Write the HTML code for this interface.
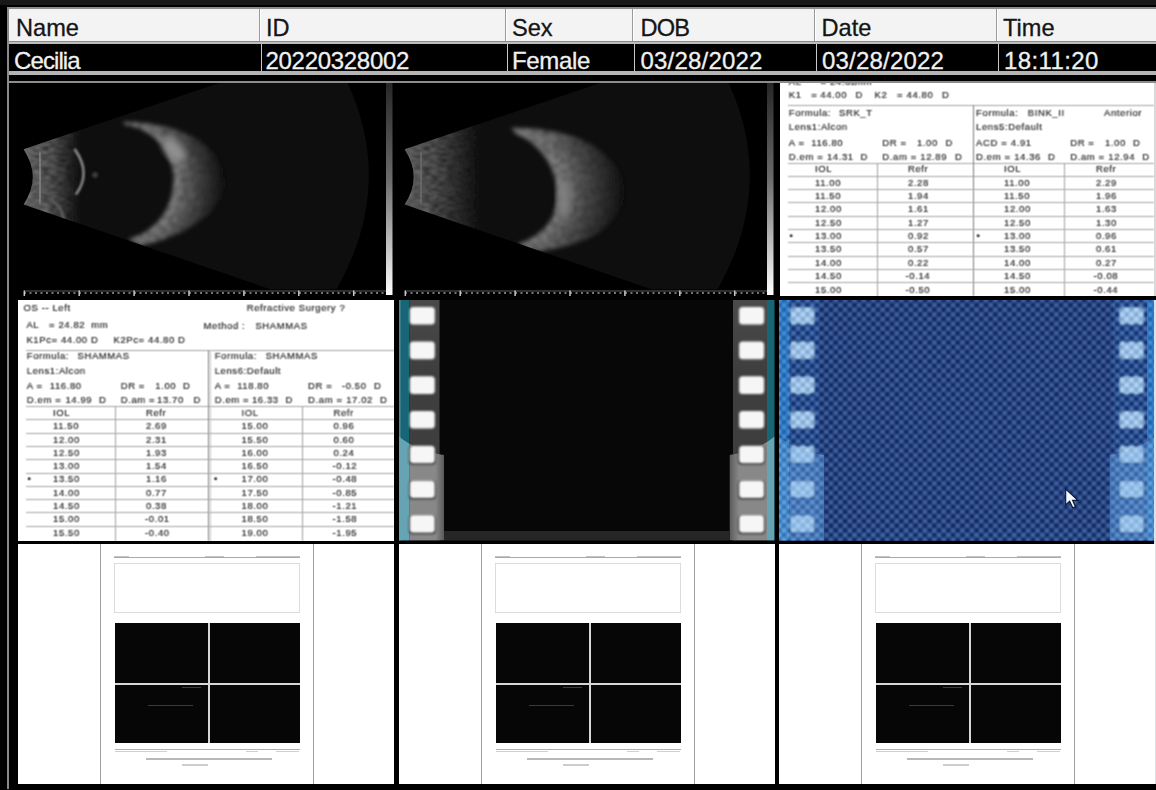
<!DOCTYPE html><html><head><meta charset="utf-8"><style>
*{margin:0;padding:0;box-sizing:border-box}
html,body{width:1156px;height:790px;overflow:hidden;background:#000}
body{position:relative;font-family:"Liberation Sans",sans-serif}
.abs{position:absolute}
.hd{position:absolute;top:11.5px;height:32px;font-size:23.6px;line-height:32px;color:#151515;white-space:nowrap;-webkit-text-stroke:0.3px #151515}
.dt{position:absolute;top:46.5px;height:27px;font-size:24px;line-height:27px;color:#f0f0f0;white-space:nowrap;-webkit-text-stroke:0.3px #f0f0f0}
.t{position:absolute;white-space:nowrap;font-size:9.5px;line-height:11px;color:#141414;letter-spacing:0.6px;-webkit-text-stroke:0.12px #141414}
.rep{position:absolute;background:#fff;overflow:hidden}
.hl{position:absolute;height:1px;background:#bdbdbd}
.vl{position:absolute;width:1px;background:#a8a8a8}
</style></head><body>
<svg width="0" height="0" style="position:absolute"><filter id="sb" x="0" y="0" width="100%" height="100%"><feConvolveMatrix order="3" kernelMatrix="1 2 1 2 4 2 1 2 1" divisor="16" edgeMode="none"/></filter></svg>
<div class="abs" style="left:0;top:0;width:1156px;height:5px;background:#181818"></div>
<div class="abs" style="left:7px;top:7px;width:2px;height:782px;background:#8a8a8a"></div>
<div class="abs" style="left:7px;top:7px;width:1149px;height:2px;background:#8c8c8c"></div>
<div class="abs" style="left:9px;top:9px;width:1147px;height:32px;background:#f3f3f3"></div>
<div class="abs" style="left:9px;top:41px;width:1147px;height:1px;background:#8a8a8a"></div>
<div class="abs" style="left:9px;top:42px;width:1147px;height:2px;background:#bdbdbd"></div>
<div class="abs" style="left:9px;top:71px;width:1147px;height:4px;background:#b4b4b4"></div>
<div class="abs" style="left:259px;top:9px;width:1px;height:32px;background:#9a9a9a"></div>
<div class="abs" style="left:260px;top:9px;width:1px;height:32px;background:#fff"></div>
<div class="abs" style="left:505px;top:9px;width:1px;height:32px;background:#9a9a9a"></div>
<div class="abs" style="left:506px;top:9px;width:1px;height:32px;background:#fff"></div>
<div class="abs" style="left:632px;top:9px;width:1px;height:32px;background:#9a9a9a"></div>
<div class="abs" style="left:633px;top:9px;width:1px;height:32px;background:#fff"></div>
<div class="abs" style="left:814px;top:9px;width:1px;height:32px;background:#9a9a9a"></div>
<div class="abs" style="left:815px;top:9px;width:1px;height:32px;background:#fff"></div>
<div class="abs" style="left:996px;top:9px;width:1px;height:32px;background:#9a9a9a"></div>
<div class="abs" style="left:997px;top:9px;width:1px;height:32px;background:#fff"></div>
<div class="abs" style="left:261px;top:44px;width:1px;height:27px;background:#c8c8c8"></div>
<div class="abs" style="left:507px;top:44px;width:1px;height:27px;background:#c8c8c8"></div>
<div class="abs" style="left:634px;top:44px;width:1px;height:27px;background:#c8c8c8"></div>
<div class="abs" style="left:816px;top:44px;width:1px;height:27px;background:#c8c8c8"></div>
<div class="abs" style="left:998px;top:44px;width:1px;height:27px;background:#c8c8c8"></div>
<div class="hd" style="left:16px;letter-spacing:0px">Name</div>
<div class="hd" style="left:266px;letter-spacing:0px">ID</div>
<div class="hd" style="left:512px;letter-spacing:0px">Sex</div>
<div class="hd" style="left:640.5px;letter-spacing:-0.8px">DOB</div>
<div class="hd" style="left:821.5px;letter-spacing:0px">Date</div>
<div class="hd" style="left:1003px;letter-spacing:0px">Time</div>
<div class="dt" style="left:14px;letter-spacing:-0.9px">Cecilia</div>
<div class="dt" style="left:265.5px;letter-spacing:-0.3px">20220328002</div>
<div class="dt" style="left:512px;letter-spacing:-0.35px">Female</div>
<div class="dt" style="left:640.5px;letter-spacing:0.2px">03/28/2022</div>
<div class="dt" style="left:822px;letter-spacing:0.2px">03/28/2022</div>
<div class="dt" style="left:1004px;letter-spacing:0.4px">18:11:20</div>
<div class="abs" style="left:7px;top:81px;width:1149px;height:2px;background:#8c8c8c"></div>
<svg class="abs" style="left:0;top:0" width="1156" height="300" viewBox="0 0 1156 300">
<defs>
<filter id="bl2" x="-30%" y="-30%" width="160%" height="160%"><feGaussianBlur stdDeviation="2.2"/></filter>
<filter id="bl3" x="-30%" y="-30%" width="160%" height="160%"><feGaussianBlur stdDeviation="3.5"/></filter>
<filter id="bl6" x="-50%" y="-50%" width="200%" height="200%"><feGaussianBlur stdDeviation="6"/></filter>
<filter id="bl1" x="-20%" y="-20%" width="140%" height="140%"><feGaussianBlur stdDeviation="0.85"/></filter>
<filter id="tex2" x="-30%" y="-30%" width="160%" height="160%"><feTurbulence type="fractalNoise" baseFrequency="0.3" numOctaves="2" seed="3" result="n"/><feColorMatrix in="n" type="matrix" values="0 0 0 0 0  0 0 0 0 0  0 0 0 0 0  0 0 0 1.6 -0.1" result="na"/><feComposite in="SourceGraphic" in2="na" operator="in" result="t"/><feGaussianBlur in="t" stdDeviation="1.9"/></filter>
<filter id="tex3" x="-30%" y="-30%" width="160%" height="160%"><feTurbulence type="fractalNoise" baseFrequency="0.25" numOctaves="2" seed="7" result="n"/><feColorMatrix in="n" type="matrix" values="0 0 0 0 0  0 0 0 0 0  0 0 0 0 0  0 0 0 2.0 -0.45" result="na"/><feComposite in="SourceGraphic" in2="na" operator="in" result="t"/><feGaussianBlur in="t" stdDeviation="2.6"/></filter>
<radialGradient id="rg1" gradientUnits="userSpaceOnUse" cx="113" cy="183" r="112"><stop offset="0.5" stop-color="#a8a8a8"/><stop offset="0.6" stop-color="#8e8e8e"/><stop offset="0.73" stop-color="#5e5e5e"/><stop offset="0.88" stop-color="#303030"/><stop offset="1" stop-color="#0e0e0e"/></radialGradient>
<radialGradient id="rg2" gradientUnits="userSpaceOnUse" cx="118" cy="189" r="126"><stop offset="0.45" stop-color="#a0a0a0"/><stop offset="0.55" stop-color="#888"/><stop offset="0.7" stop-color="#5a5a5a"/><stop offset="0.87" stop-color="#2e2e2e"/><stop offset="1" stop-color="#0e0e0e"/></radialGradient>
<filter id="tex4" x="0" y="0" width="100%" height="100%"><feTurbulence type="fractalNoise" baseFrequency="0.12 0.5" numOctaves="2" seed="11" result="n"/><feColorMatrix in="n" type="matrix" values="0 0 0 0 0  0 0 0 0 0  0 0 0 0 0  0 0 0 1.5 0" result="na"/><feComposite in="SourceGraphic" in2="na" operator="in" result="t"/><feGaussianBlur in="t" stdDeviation="1"/></filter>
<filter id="bl15" x="-30%" y="-30%" width="160%" height="160%"><feGaussianBlur stdDeviation="1.5"/></filter>
<linearGradient id="gbar" x1="0" y1="0" x2="0" y2="1"><stop offset="0" stop-color="#262626"/><stop offset="0.45" stop-color="#6a6a6a"/><stop offset="1" stop-color="#ffffff"/></linearGradient>
<radialGradient id="crg" cx="0.5" cy="0.5" r="0.5"><stop offset="0.50" stop-color="#9a9a9a"/><stop offset="0.62" stop-color="#7a7a7a"/><stop offset="0.80" stop-color="#3a3a3a"/><stop offset="1" stop-color="#121212" stop-opacity="0"/></radialGradient>
<linearGradient id="antg" x1="0" y1="0" x2="1" y2="0"><stop offset="0" stop-color="#7a7a7a"/><stop offset="0.45" stop-color="#6a6a6a"/><stop offset="0.75" stop-color="#3a3a3a"/><stop offset="1" stop-color="#0e0e0e"/></linearGradient>
<linearGradient id="antg2" x1="0" y1="0" x2="1" y2="0"><stop offset="0" stop-color="#707070"/><stop offset="0.3" stop-color="#666"/><stop offset="0.6" stop-color="#444"/><stop offset="1" stop-color="#0e0e0e"/></linearGradient>
<clipPath id="c1"><rect x="9" y="83" width="377" height="206.5"/></clipPath>
<clipPath id="c2"><rect x="393" y="83" width="374" height="206.5"/></clipPath>
</defs>
<g clip-path="url(#c1)"><g transform="translate(0,0)">
<path d="M23.6,149.3 L219,83 L347.6,83 Q395,186 336.5,289.5 L271,289.5 L23.6,204.5 Q42,177 23.6,149.3 Z" fill="#0e0e0e"/>
<clipPath id="f1"><path d="M23.6,149.3 L219,83 L347.6,83 Q395,186 336.5,289.5 L271,289.5 L23.6,204.5 Q42,177 23.6,149.3 Z"/></clipPath>
<g clip-path="url(#f1)">
<rect x="18" y="120" width="62" height="115" fill="url(#antg)" filter="url(#tex4)"/>
<path d="M39.5,152 Q41,177 39.5,204" stroke="#8a8a8a" stroke-width="2.5" fill="none" filter="url(#bl1)"/>
<path d="M25,150 Q36,176 25,204" stroke="#707070" stroke-width="2.5" fill="none" filter="url(#bl1)"/>
<path d="M50,200 Q62,205 64,222" stroke="#5a5a5a" stroke-width="3" fill="none" filter="url(#bl1)"/>
<path d="M74.5,149 Q92,173 75.8,194.7" stroke="#a0a0a0" stroke-width="2.2" fill="none" filter="url(#bl1)"/>
<circle cx="95" cy="175" r="3" fill="#3a3a3a" filter="url(#bl1)"/>
<path d="M126,125 C160,130 174,160 173.5,180 C173,205 160,230 128.5,239.5 L140,246 C190,235 224,210 224,183 C224,150 190,122 122,122 Z" fill="url(#rg1)" filter="url(#tex2)"/>
<ellipse cx="174" cy="150" rx="14" ry="8" transform="rotate(50 174 150)" fill="#909090" filter="url(#bl3)"/>
</g>
</g></g>
<g transform="translate(0,0)">
<rect x="386" y="83" width="6.5" height="212" fill="url(#gbar)"/>
<line x1="24" y1="291" x2="386" y2="291" stroke="#5a5a5a" stroke-width="1.2"/>
<line x1="24" y1="293" x2="386" y2="293" stroke="#9a9a9a" stroke-width="1.6" stroke-dasharray="2,3.5"/>
<line x1="24.3" y1="290.5" x2="24.3" y2="296" stroke="#c8c8c8" stroke-width="1.5"/>
<line x1="79.2" y1="290.5" x2="79.2" y2="296" stroke="#c8c8c8" stroke-width="1.5"/>
<line x1="134.1" y1="290.5" x2="134.1" y2="296" stroke="#c8c8c8" stroke-width="1.5"/>
<line x1="189.0" y1="290.5" x2="189.0" y2="296" stroke="#c8c8c8" stroke-width="1.5"/>
<line x1="243.9" y1="290.5" x2="243.9" y2="296" stroke="#c8c8c8" stroke-width="1.5"/>
<line x1="298.8" y1="290.5" x2="298.8" y2="296" stroke="#c8c8c8" stroke-width="1.5"/>
<line x1="353.7" y1="290.5" x2="353.7" y2="296" stroke="#c8c8c8" stroke-width="1.5"/>
</g>
<g clip-path="url(#c2)"><g transform="translate(381,0)">
<path d="M23.6,149.3 L219,83 L347.6,83 Q395,186 336.5,289.5 L271,289.5 L23.6,204.5 Q42,177 23.6,149.3 Z" fill="#0e0e0e"/>
<clipPath id="f2"><path d="M23.6,149.3 L219,83 L347.6,83 Q395,186 336.5,289.5 L271,289.5 L23.6,204.5 Q42,177 23.6,149.3 Z"/></clipPath>
<g clip-path="url(#f2)">
<rect x="18" y="120" width="80" height="115" fill="url(#antg2)" filter="url(#tex4)"/>
<path d="M39.3,152 Q41,177 39.3,204" stroke="#707070" stroke-width="2.5" fill="none" filter="url(#bl1)"/>
<path d="M25,150 Q40,176 25,204" stroke="#606060" stroke-width="2.5" fill="none" filter="url(#bl1)"/>
<path d="M135,134 C162,145 176,170 176,195 C176,215 165,235 137,244 L150,252 C205,248 243,225 243,192 C243,160 205,126 130,128 Z" fill="url(#rg2)" filter="url(#tex2)"/>
<ellipse cx="183" cy="198" rx="6" ry="20" fill="#808080" filter="url(#bl3)"/>
</g>
</g></g>
<g transform="translate(381,0)">
<rect x="386" y="83" width="6.5" height="212" fill="url(#gbar)"/>
<line x1="24" y1="291" x2="386" y2="291" stroke="#5a5a5a" stroke-width="1.2"/>
<line x1="24" y1="293" x2="386" y2="293" stroke="#9a9a9a" stroke-width="1.6" stroke-dasharray="2,3.5"/>
<line x1="24.3" y1="290.5" x2="24.3" y2="296" stroke="#c8c8c8" stroke-width="1.5"/>
<line x1="79.2" y1="290.5" x2="79.2" y2="296" stroke="#c8c8c8" stroke-width="1.5"/>
<line x1="134.1" y1="290.5" x2="134.1" y2="296" stroke="#c8c8c8" stroke-width="1.5"/>
<line x1="189.0" y1="290.5" x2="189.0" y2="296" stroke="#c8c8c8" stroke-width="1.5"/>
<line x1="243.9" y1="290.5" x2="243.9" y2="296" stroke="#c8c8c8" stroke-width="1.5"/>
<line x1="298.8" y1="290.5" x2="298.8" y2="296" stroke="#c8c8c8" stroke-width="1.5"/>
<line x1="353.7" y1="290.5" x2="353.7" y2="296" stroke="#c8c8c8" stroke-width="1.5"/>
</g>
</svg>
<div class="rep" style="left:780px;top:83px;width:374px;height:213px"><div class="abs" style="left:-780px;top:-83px;width:1156px;height:400px;filter:url(#sb)">
<div class="t" style="left:788.8px;top:75.8px">AL</div>
<div class="t" style="left:820.5px;top:75.8px">= 24.82</div>
<div class="t" style="left:855.0px;top:75.8px">mm</div>
<div class="t" style="left:788.8px;top:89.3px">K1</div>
<div class="t" style="left:811.3px;top:89.3px">=</div>
<div class="t" style="left:820.3px;top:89.3px">44.00</div>
<div class="t" style="left:855.4px;top:89.3px">D</div>
<div class="t" style="left:874.5px;top:89.3px">K2</div>
<div class="t" style="left:897.0px;top:89.3px">=</div>
<div class="t" style="left:906.5px;top:89.3px">44.80</div>
<div class="t" style="left:942.0px;top:89.3px">D</div>
<div class="hl" style="left:788.0px;top:105.0px;width:366.0px;background:#a4a4a4"></div>
<div class="t" style="left:788.8px;top:106.5px">Formula:</div>
<div class="t" style="left:839.0px;top:106.5px">SRK_T</div>
<div class="t" style="left:788.8px;top:120.9px">Lens1:Alcon</div>
<div class="t" style="left:788.8px;top:137.0px">A =</div>
<div class="t" style="left:811.3px;top:137.0px">116.80</div>
<div class="t" style="left:882.3px;top:137.0px">DR =</div>
<div class="t" style="left:916.9px;top:137.0px">1.00</div>
<div class="t" style="left:945.4px;top:137.0px">D</div>
<div class="t" style="left:788.8px;top:150.7px">D.em =</div>
<div class="t" style="left:826.9px;top:150.7px">14.31</div>
<div class="t" style="left:860.6px;top:150.7px">D</div>
<div class="t" style="left:882.3px;top:150.7px">D.am =</div>
<div class="t" style="left:920.3px;top:150.7px">12.89</div>
<div class="t" style="left:955.0px;top:150.7px">D</div>
<div class="t" style="left:976.1px;top:106.5px">Formula:</div>
<div class="t" style="left:1027.8px;top:106.5px">BINK_II</div>
<div class="t" style="left:1104.0px;top:106.5px">Anterior</div>
<div class="t" style="left:976.1px;top:120.9px">Lens5:Default</div>
<div class="t" style="left:976.1px;top:137.0px">ACD =</div>
<div class="t" style="left:1010.8px;top:137.0px">4.91</div>
<div class="t" style="left:1070.2px;top:137.0px">DR =</div>
<div class="t" style="left:1104.9px;top:137.0px">1.00</div>
<div class="t" style="left:1132.9px;top:137.0px">D</div>
<div class="t" style="left:976.1px;top:150.7px">D.em =</div>
<div class="t" style="left:1014.2px;top:150.7px">14.36</div>
<div class="t" style="left:1048.1px;top:150.7px">D</div>
<div class="t" style="left:1070.2px;top:150.7px">D.am =</div>
<div class="t" style="left:1108.3px;top:150.7px">12.94</div>
<div class="t" style="left:1142.2px;top:150.7px">D</div>
<div class="hl" style="left:788.0px;top:162.5px;width:366.0px;background:#a4a4a4"></div>
<div class="hl" style="left:788.0px;top:175.5px;width:366.0px;background:#a4a4a4"></div>
<div class="vl" style="left:972.5px;top:105.0px;height:191.0px;background:#7a7a7a"></div>
<div class="vl" style="left:877.0px;top:162.5px;height:134.0px;background:#a0a0a0"></div>
<div class="vl" style="left:1064.0px;top:162.5px;height:134.0px;background:#a0a0a0"></div>
<div class="t" style="left:815.0px;top:163.4px">IOL</div>
<div class="t" style="left:908.0px;top:163.4px">Refr</div>
<div class="t" style="left:1004.0px;top:163.4px">IOL</div>
<div class="t" style="left:1096.0px;top:163.4px">Refr</div>
<div class="t" style="left:815.0px;top:176.6px">11.00</div>
<div class="t" style="left:908.0px;top:176.6px">2.28</div>
<div class="t" style="left:1004.0px;top:176.6px">11.00</div>
<div class="t" style="left:1096.0px;top:176.6px">2.29</div>
<div class="hl" style="left:788.0px;top:188.9px;width:366.0px;background:#a4a4a4"></div>
<div class="t" style="left:815.0px;top:190.0px">11.50</div>
<div class="t" style="left:908.0px;top:190.0px">1.94</div>
<div class="t" style="left:1004.0px;top:190.0px">11.50</div>
<div class="t" style="left:1096.0px;top:190.0px">1.96</div>
<div class="hl" style="left:788.0px;top:202.2px;width:366.0px;background:#a4a4a4"></div>
<div class="t" style="left:815.0px;top:203.3px">12.00</div>
<div class="t" style="left:908.0px;top:203.3px">1.61</div>
<div class="t" style="left:1004.0px;top:203.3px">12.00</div>
<div class="t" style="left:1096.0px;top:203.3px">1.63</div>
<div class="hl" style="left:788.0px;top:215.6px;width:366.0px;background:#a4a4a4"></div>
<div class="t" style="left:815.0px;top:216.7px">12.50</div>
<div class="t" style="left:908.0px;top:216.7px">1.27</div>
<div class="t" style="left:1004.0px;top:216.7px">12.50</div>
<div class="t" style="left:1096.0px;top:216.7px">1.30</div>
<div class="hl" style="left:788.0px;top:228.9px;width:366.0px;background:#a4a4a4"></div>
<div class="t" style="left:815.0px;top:230.0px">13.00</div>
<div class="t" style="left:908.0px;top:230.0px">0.92</div>
<div class="t" style="left:1004.0px;top:230.0px">13.00</div>
<div class="t" style="left:1096.0px;top:230.0px">0.96</div>
<div class="t" style="left:789.5px;top:230.0px">&#8226;</div>
<div class="t" style="left:976.5px;top:230.0px">&#8226;</div>
<div class="hl" style="left:788.0px;top:242.3px;width:366.0px;background:#a4a4a4"></div>
<div class="t" style="left:815.0px;top:243.4px">13.50</div>
<div class="t" style="left:908.0px;top:243.4px">0.57</div>
<div class="t" style="left:1004.0px;top:243.4px">13.50</div>
<div class="t" style="left:1096.0px;top:243.4px">0.61</div>
<div class="hl" style="left:788.0px;top:255.7px;width:366.0px;background:#a4a4a4"></div>
<div class="t" style="left:815.0px;top:256.8px">14.00</div>
<div class="t" style="left:908.0px;top:256.8px">0.22</div>
<div class="t" style="left:1004.0px;top:256.8px">14.00</div>
<div class="t" style="left:1096.0px;top:256.8px">0.27</div>
<div class="hl" style="left:788.0px;top:269.0px;width:366.0px;background:#a4a4a4"></div>
<div class="t" style="left:815.0px;top:270.1px">14.50</div>
<div class="t" style="left:905.5px;top:270.1px">-0.14</div>
<div class="t" style="left:1004.0px;top:270.1px">14.50</div>
<div class="t" style="left:1093.5px;top:270.1px">-0.08</div>
<div class="hl" style="left:788.0px;top:282.4px;width:366.0px;background:#a4a4a4"></div>
<div class="t" style="left:815.0px;top:283.5px">15.00</div>
<div class="t" style="left:905.5px;top:283.5px">-0.50</div>
<div class="t" style="left:1004.0px;top:283.5px">15.00</div>
<div class="t" style="left:1093.5px;top:283.5px">-0.44</div>
</div></div>
<div class="abs" style="left:1154px;top:83px;width:2px;height:213px;background:#d8d8d8"></div>
<div class="rep" style="left:18px;top:300px;width:375.5px;height:240.5px"><div class="abs" style="left:-18px;top:-300px;width:600px;height:600px;filter:url(#sb)">
<div class="t" style="left:23.5px;top:301.6px">OS -- Left</div>
<div class="t" style="left:246.7px;top:301.5px">Refractive Surgery ?</div>
<div class="t" style="left:26.4px;top:319.3px">AL</div>
<div class="t" style="left:48.9px;top:319.3px">=</div>
<div class="t" style="left:58.4px;top:319.3px">24.82</div>
<div class="t" style="left:91.3px;top:319.3px">mm</div>
<div class="t" style="left:203.5px;top:319.5px">Method :</div>
<div class="t" style="left:255.4px;top:319.5px">SHAMMAS</div>
<div class="t" style="left:26.4px;top:333.5px">K1Pc= 44.00 D</div>
<div class="t" style="left:113.5px;top:333.5px">K2Pc= 44.80 D</div>
<div class="t" style="left:26.8px;top:350.1px">Formula:</div>
<div class="t" style="left:77.5px;top:350.1px">SHAMMAS</div>
<div class="t" style="left:26.8px;top:364.8px">Lens1:Alcon</div>
<div class="t" style="left:26.8px;top:380.3px">A =</div>
<div class="t" style="left:49.8px;top:380.3px">116.80</div>
<div class="t" style="left:120.7px;top:380.3px">DR =</div>
<div class="t" style="left:155.3px;top:380.3px">1.00</div>
<div class="t" style="left:183.0px;top:380.3px">D</div>
<div class="t" style="left:26.8px;top:394.2px">D.em =</div>
<div class="t" style="left:65.4px;top:394.2px">14.99</div>
<div class="t" style="left:99.1px;top:394.2px">D</div>
<div class="t" style="left:120.7px;top:394.2px">D.am =</div>
<div class="t" style="left:157.0px;top:394.2px">13.70</div>
<div class="t" style="left:193.4px;top:394.2px">D</div>
<div class="t" style="left:214.7px;top:350.1px">Formula:</div>
<div class="t" style="left:265.7px;top:350.1px">SHAMMAS</div>
<div class="t" style="left:214.7px;top:364.8px">Lens6:Default</div>
<div class="t" style="left:214.7px;top:380.3px">A =</div>
<div class="t" style="left:237.2px;top:380.3px">118.80</div>
<div class="t" style="left:308.1px;top:380.3px">DR =</div>
<div class="t" style="left:341.9px;top:380.3px">-0.50</div>
<div class="t" style="left:373.9px;top:380.3px">D</div>
<div class="t" style="left:214.7px;top:394.2px">D.em =</div>
<div class="t" style="left:251.9px;top:394.2px">16.33</div>
<div class="t" style="left:285.6px;top:394.2px">D</div>
<div class="t" style="left:308.1px;top:394.2px">D.am =</div>
<div class="t" style="left:346.2px;top:394.2px">17.02</div>
<div class="t" style="left:379.9px;top:394.2px">D</div>
<div class="hl" style="left:26.0px;top:349.5px;width:368.0px;background:#a4a4a4"></div>
<div class="hl" style="left:26.0px;top:405.5px;width:368.0px;background:#a4a4a4"></div>
<div class="hl" style="left:26.0px;top:419.0px;width:368.0px;background:#a4a4a4"></div>
<div class="vl" style="left:208.0px;top:349.5px;height:191.0px;background:#7a7a7a"></div>
<div class="vl" style="left:210.0px;top:349.5px;height:191.0px;background:#c8c8c8"></div>
<div class="vl" style="left:114.5px;top:405.5px;height:135.0px;background:#a0a0a0"></div>
<div class="vl" style="left:302.0px;top:405.5px;height:135.0px;background:#a0a0a0"></div>
<div class="t" style="left:53.0px;top:407.3px">IOL</div>
<div class="t" style="left:146.0px;top:407.3px">Refr</div>
<div class="t" style="left:241.5px;top:407.3px">IOL</div>
<div class="t" style="left:333.5px;top:407.3px">Refr</div>
<div class="t" style="left:53.0px;top:420.2px">11.50</div>
<div class="t" style="left:146.0px;top:420.2px">2.69</div>
<div class="t" style="left:241.5px;top:420.2px">15.00</div>
<div class="t" style="left:333.5px;top:420.2px">0.96</div>
<div class="hl" style="left:26.0px;top:432.6px;width:368.0px;background:#a4a4a4"></div>
<div class="t" style="left:53.0px;top:433.5px">12.00</div>
<div class="t" style="left:146.0px;top:433.5px">2.31</div>
<div class="t" style="left:241.5px;top:433.5px">15.50</div>
<div class="t" style="left:333.5px;top:433.5px">0.60</div>
<div class="hl" style="left:26.0px;top:445.9px;width:368.0px;background:#a4a4a4"></div>
<div class="t" style="left:53.0px;top:446.8px">12.50</div>
<div class="t" style="left:146.0px;top:446.8px">1.93</div>
<div class="t" style="left:241.5px;top:446.8px">16.00</div>
<div class="t" style="left:333.5px;top:446.8px">0.24</div>
<div class="hl" style="left:26.0px;top:459.2px;width:368.0px;background:#a4a4a4"></div>
<div class="t" style="left:53.0px;top:460.1px">13.00</div>
<div class="t" style="left:146.0px;top:460.1px">1.54</div>
<div class="t" style="left:241.5px;top:460.1px">16.50</div>
<div class="t" style="left:332.5px;top:460.1px">-0.12</div>
<div class="hl" style="left:26.0px;top:472.5px;width:368.0px;background:#a4a4a4"></div>
<div class="t" style="left:53.0px;top:473.4px">13.50</div>
<div class="t" style="left:146.0px;top:473.4px">1.16</div>
<div class="t" style="left:241.5px;top:473.4px">17.00</div>
<div class="t" style="left:332.5px;top:473.4px">-0.48</div>
<div class="t" style="left:27.5px;top:473.4px">&#8226;</div>
<div class="t" style="left:214.0px;top:473.4px">&#8226;</div>
<div class="hl" style="left:26.0px;top:485.8px;width:368.0px;background:#a4a4a4"></div>
<div class="t" style="left:53.0px;top:486.7px">14.00</div>
<div class="t" style="left:146.0px;top:486.7px">0.77</div>
<div class="t" style="left:241.5px;top:486.7px">17.50</div>
<div class="t" style="left:332.5px;top:486.7px">-0.85</div>
<div class="hl" style="left:26.0px;top:499.1px;width:368.0px;background:#a4a4a4"></div>
<div class="t" style="left:53.0px;top:500.0px">14.50</div>
<div class="t" style="left:146.0px;top:500.0px">0.38</div>
<div class="t" style="left:241.5px;top:500.0px">18.00</div>
<div class="t" style="left:332.5px;top:500.0px">-1.21</div>
<div class="hl" style="left:26.0px;top:512.4px;width:368.0px;background:#a4a4a4"></div>
<div class="t" style="left:53.0px;top:513.3px">15.00</div>
<div class="t" style="left:145.0px;top:513.3px">-0.01</div>
<div class="t" style="left:241.5px;top:513.3px">18.50</div>
<div class="t" style="left:332.5px;top:513.3px">-1.58</div>
<div class="hl" style="left:26.0px;top:525.7px;width:368.0px;background:#a4a4a4"></div>
<div class="t" style="left:53.0px;top:526.6px">15.50</div>
<div class="t" style="left:145.0px;top:526.6px">-0.40</div>
<div class="t" style="left:241.5px;top:526.6px">19.00</div>
<div class="t" style="left:332.5px;top:526.6px">-1.95</div>
</div></div>
<svg class="abs" style="left:399px;top:300px" width="375.5" height="240.5" viewBox="0 0 375.5 240.5">
<defs>
<linearGradient id="egn" x1="0" y1="0" x2="0" y2="1"><stop offset="0" stop-color="#4a4a4a"/><stop offset="0.3" stop-color="#3e3e3e"/><stop offset="1" stop-color="#3e3e3e"/></linearGradient>
<linearGradient id="lgLn" x1="0" y1="0" x2="1" y2="0"><stop offset="0" stop-color="#888888"/><stop offset="0.75" stop-color="#888888"/><stop offset="1" stop-color="#5a5a5a"/></linearGradient>
<linearGradient id="lgRn" x1="1" y1="0" x2="0" y2="0"><stop offset="0" stop-color="#888888"/><stop offset="0.75" stop-color="#888888"/><stop offset="1" stop-color="#5a5a5a"/></linearGradient>
<clipPath id="loLn"><path d="M0,136.5 C8,143 20,151 45,155 L45,240.5 L0,240.5 Z"/></clipPath>
<clipPath id="loRn"><path d="M375.5,136.5 C367.5,143 355.5,151 330.5,155 L330.5,240.5 L375.5,240.5 Z"/></clipPath>
<filter id="hbn" x="-20%" y="-30%" width="140%" height="160%"><feGaussianBlur stdDeviation="0.9"/></filter>
</defs>
<rect x="0" y="0" width="375.5" height="240.5" fill="#070707"/>
<rect x="0" y="0" width="10.5" height="240.5" fill="#176676"/>
<rect x="0" y="0" width="1.6" height="240.5" fill="#4a8a9a"/>
<rect x="10.5" y="0" width="30" height="240.5" fill="url(#egn)"/>
<g clip-path="url(#loLn)"><rect x="0" y="0" width="10.5" height="240.5" fill="#66a4b4"/><rect x="10.5" y="0" width="34.5" height="240.5" fill="url(#lgLn)"/></g>
<rect x="368.0" y="0" width="7.5" height="240.5" fill="#176676"/>
<rect x="334.0" y="0" width="34" height="240.5" fill="url(#egn)"/>
<g clip-path="url(#loRn)"><rect x="368.0" y="0" width="7.5" height="240.5" fill="#66a4b4"/><rect x="330.5" y="0" width="37.5" height="240.5" fill="url(#lgRn)"/></g>
<rect x="45" y="231" width="285.5" height="9.5" fill="#262626"/>
<rect x="10.8" y="6.9" width="25" height="17.6" rx="3.5" fill="#f6f6f6" filter="url(#hbn)"/>
<rect x="340.1" y="6.9" width="25" height="17.6" rx="3.5" fill="#f6f6f6" filter="url(#hbn)"/>
<rect x="10.8" y="41.6" width="25" height="17.6" rx="3.5" fill="#f6f6f6" filter="url(#hbn)"/>
<rect x="340.1" y="41.6" width="25" height="17.6" rx="3.5" fill="#f6f6f6" filter="url(#hbn)"/>
<rect x="10.8" y="76.30000000000001" width="25" height="17.6" rx="3.5" fill="#f6f6f6" filter="url(#hbn)"/>
<rect x="340.1" y="76.30000000000001" width="25" height="17.6" rx="3.5" fill="#f6f6f6" filter="url(#hbn)"/>
<rect x="10.8" y="111.00000000000001" width="25" height="17.6" rx="3.5" fill="#f6f6f6" filter="url(#hbn)"/>
<rect x="340.1" y="111.00000000000001" width="25" height="17.6" rx="3.5" fill="#f6f6f6" filter="url(#hbn)"/>
<rect x="10.0" y="146.00000000000003" width="26.5" height="18.6" rx="3" fill="#2a2a2a" filter="url(#hbn)"/>
<rect x="10.8" y="145.70000000000002" width="25" height="17.6" rx="3.5" fill="#f6f6f6" filter="url(#hbn)"/>
<rect x="339.3" y="146.00000000000003" width="26.5" height="18.6" rx="3" fill="#2a2a2a" filter="url(#hbn)"/>
<rect x="340.1" y="145.70000000000002" width="25" height="17.6" rx="3.5" fill="#f6f6f6" filter="url(#hbn)"/>
<rect x="10.0" y="180.70000000000002" width="26.5" height="18.6" rx="3" fill="#2a2a2a" filter="url(#hbn)"/>
<rect x="10.8" y="180.4" width="25" height="17.6" rx="3.5" fill="#f6f6f6" filter="url(#hbn)"/>
<rect x="339.3" y="180.70000000000002" width="26.5" height="18.6" rx="3" fill="#2a2a2a" filter="url(#hbn)"/>
<rect x="340.1" y="180.4" width="25" height="17.6" rx="3.5" fill="#f6f6f6" filter="url(#hbn)"/>
<rect x="10.0" y="215.40000000000003" width="26.5" height="18.6" rx="3" fill="#2a2a2a" filter="url(#hbn)"/>
<rect x="10.8" y="215.10000000000002" width="25" height="17.6" rx="3.5" fill="#f6f6f6" filter="url(#hbn)"/>
<rect x="339.3" y="215.40000000000003" width="26.5" height="18.6" rx="3" fill="#2a2a2a" filter="url(#hbn)"/>
<rect x="340.1" y="215.10000000000002" width="25" height="17.6" rx="3.5" fill="#f6f6f6" filter="url(#hbn)"/>
</svg>
<svg class="abs" style="left:779px;top:300px" width="375.5" height="240.5" viewBox="0 0 375.5 240.5">
<defs>
<linearGradient id="egb" x1="0" y1="0" x2="0" y2="1"><stop offset="0" stop-color="#3262a8"/><stop offset="0.3" stop-color="#2c5a9e"/><stop offset="1" stop-color="#2c5a9e"/></linearGradient>
<linearGradient id="lgLb" x1="0" y1="0" x2="1" y2="0"><stop offset="0" stop-color="#5a94d6"/><stop offset="0.75" stop-color="#5a94d6"/><stop offset="1" stop-color="#4a80c0"/></linearGradient>
<linearGradient id="lgRb" x1="1" y1="0" x2="0" y2="0"><stop offset="0" stop-color="#5a94d6"/><stop offset="0.75" stop-color="#5a94d6"/><stop offset="1" stop-color="#4a80c0"/></linearGradient>
<clipPath id="loLb"><path d="M0,136.5 C8,143 20,151 45,155 L45,240.5 L0,240.5 Z"/></clipPath>
<clipPath id="loRb"><path d="M375.5,136.5 C367.5,143 355.5,151 330.5,155 L330.5,240.5 L375.5,240.5 Z"/></clipPath>
<filter id="hbb" x="-20%" y="-30%" width="140%" height="160%"><feGaussianBlur stdDeviation="0.9"/></filter>
<pattern id="chk" patternUnits="userSpaceOnUse" width="9.4" height="9.4"><rect x="0" y="0" width="4.7" height="4.7" fill="rgba(0,12,60,0.68)"/><rect x="4.7" y="4.7" width="4.7" height="4.7" fill="rgba(0,12,60,0.68)"/><rect x="4.7" y="0" width="4.7" height="4.7" fill="rgba(115,155,225,0.42)"/><rect x="0" y="4.7" width="4.7" height="4.7" fill="rgba(115,155,225,0.42)"/></pattern>
</defs>
<rect x="0" y="0" width="375.5" height="240.5" fill="#294a88"/>
<rect x="0" y="0" width="10.5" height="240.5" fill="#3590e0"/>
<rect x="0" y="0" width="1.6" height="240.5" fill="#4aa0e8"/>
<rect x="10.5" y="0" width="30" height="240.5" fill="url(#egb)"/>
<g clip-path="url(#loLb)"><rect x="0" y="0" width="10.5" height="240.5" fill="#58a8ec"/><rect x="10.5" y="0" width="34.5" height="240.5" fill="url(#lgLb)"/></g>
<rect x="368.0" y="0" width="7.5" height="240.5" fill="#3590e0"/>
<rect x="334.0" y="0" width="34" height="240.5" fill="url(#egb)"/>
<g clip-path="url(#loRb)"><rect x="368.0" y="0" width="7.5" height="240.5" fill="#58a8ec"/><rect x="330.5" y="0" width="37.5" height="240.5" fill="url(#lgRb)"/></g>
<rect x="45" y="231" width="285.5" height="9.5" fill="#2a528f"/>
<rect x="10.8" y="6.9" width="25" height="17.6" rx="3.5" fill="#b8e0ff" filter="url(#hbb)"/>
<rect x="340.1" y="6.9" width="25" height="17.6" rx="3.5" fill="#b8e0ff" filter="url(#hbb)"/>
<rect x="10.8" y="41.6" width="25" height="17.6" rx="3.5" fill="#b8e0ff" filter="url(#hbb)"/>
<rect x="340.1" y="41.6" width="25" height="17.6" rx="3.5" fill="#b8e0ff" filter="url(#hbb)"/>
<rect x="10.8" y="76.30000000000001" width="25" height="17.6" rx="3.5" fill="#b8e0ff" filter="url(#hbb)"/>
<rect x="340.1" y="76.30000000000001" width="25" height="17.6" rx="3.5" fill="#b8e0ff" filter="url(#hbb)"/>
<rect x="10.8" y="111.00000000000001" width="25" height="17.6" rx="3.5" fill="#b8e0ff" filter="url(#hbb)"/>
<rect x="340.1" y="111.00000000000001" width="25" height="17.6" rx="3.5" fill="#b8e0ff" filter="url(#hbb)"/>
<rect x="10.0" y="146.00000000000003" width="26.5" height="18.6" rx="3" fill="#2a5290" filter="url(#hbb)"/>
<rect x="10.8" y="145.70000000000002" width="25" height="17.6" rx="3.5" fill="#b8e0ff" filter="url(#hbb)"/>
<rect x="339.3" y="146.00000000000003" width="26.5" height="18.6" rx="3" fill="#2a5290" filter="url(#hbb)"/>
<rect x="340.1" y="145.70000000000002" width="25" height="17.6" rx="3.5" fill="#b8e0ff" filter="url(#hbb)"/>
<rect x="10.0" y="180.70000000000002" width="26.5" height="18.6" rx="3" fill="#2a5290" filter="url(#hbb)"/>
<rect x="10.8" y="180.4" width="25" height="17.6" rx="3.5" fill="#b8e0ff" filter="url(#hbb)"/>
<rect x="339.3" y="180.70000000000002" width="26.5" height="18.6" rx="3" fill="#2a5290" filter="url(#hbb)"/>
<rect x="340.1" y="180.4" width="25" height="17.6" rx="3.5" fill="#b8e0ff" filter="url(#hbb)"/>
<rect x="10.0" y="215.40000000000003" width="26.5" height="18.6" rx="3" fill="#2a5290" filter="url(#hbb)"/>
<rect x="10.8" y="215.10000000000002" width="25" height="17.6" rx="3.5" fill="#b8e0ff" filter="url(#hbb)"/>
<rect x="339.3" y="215.40000000000003" width="26.5" height="18.6" rx="3" fill="#2a5290" filter="url(#hbb)"/>
<rect x="340.1" y="215.10000000000002" width="25" height="17.6" rx="3.5" fill="#b8e0ff" filter="url(#hbb)"/>
</svg>
<div class="abs" style="left:779px;top:300px;width:375.5px;height:240.5px;overflow:hidden"><div class="abs" style="left:-2px;top:-2px;width:379.5px;height:244.5px;background:repeating-conic-gradient(rgba(0,12,60,0.58) 0 25%, rgba(120,160,230,0.30) 0 50%);background-size:9.4px 9.4px;filter:blur(0.8px)"></div></div>
<svg class="abs" style="left:779px;top:300px" width="375.5" height="240.5" viewBox="0 0 375.5 240.5">
<defs><filter id="hb2" x="-20%" y="-30%" width="140%" height="160%"><feGaussianBlur stdDeviation="1"/></filter><clipPath id="loL2"><path d="M0,136.5 C8,143 20,151 45,155 L45,240.5 L0,240.5 Z"/></clipPath><clipPath id="loR2"><path d="M375.5,136.5 C367.5,143 355.5,151 330.5,155 L330.5,240.5 L375.5,240.5 Z"/></clipPath></defs>
<g opacity="0.35"><g clip-path="url(#loL2)"><rect x="0" y="0" width="10.5" height="240.5" fill="#58a8ec"/><rect x="10.5" y="0" width="34.5" height="240.5" fill="#5a94d6"/></g>
<g clip-path="url(#loR2)"><rect x="368.0" y="0" width="7.5" height="240.5" fill="#58a8ec"/><rect x="330.5" y="0" width="37.5" height="240.5" fill="#5a94d6"/></g>
<rect x="0" y="0" width="10.5" height="136" fill="#3590e0"/><rect x="368.0" y="0" width="7.5" height="136" fill="#3590e0"/></g>
<g opacity="0.55">
<rect x="11.8" y="7.9" width="23" height="15.6" rx="3" fill="#b8e0ff" filter="url(#hb2)"/>
<rect x="341.1" y="7.9" width="23" height="15.6" rx="3" fill="#b8e0ff" filter="url(#hb2)"/>
<rect x="11.8" y="42.6" width="23" height="15.6" rx="3" fill="#b8e0ff" filter="url(#hb2)"/>
<rect x="341.1" y="42.6" width="23" height="15.6" rx="3" fill="#b8e0ff" filter="url(#hb2)"/>
<rect x="11.8" y="77.30000000000001" width="23" height="15.6" rx="3" fill="#b8e0ff" filter="url(#hb2)"/>
<rect x="341.1" y="77.30000000000001" width="23" height="15.6" rx="3" fill="#b8e0ff" filter="url(#hb2)"/>
<rect x="11.8" y="112.00000000000001" width="23" height="15.6" rx="3" fill="#b8e0ff" filter="url(#hb2)"/>
<rect x="341.1" y="112.00000000000001" width="23" height="15.6" rx="3" fill="#b8e0ff" filter="url(#hb2)"/>
<rect x="11.8" y="146.70000000000002" width="23" height="15.6" rx="3" fill="#b8e0ff" filter="url(#hb2)"/>
<rect x="341.1" y="146.70000000000002" width="23" height="15.6" rx="3" fill="#b8e0ff" filter="url(#hb2)"/>
<rect x="11.8" y="181.4" width="23" height="15.6" rx="3" fill="#b8e0ff" filter="url(#hb2)"/>
<rect x="341.1" y="181.4" width="23" height="15.6" rx="3" fill="#b8e0ff" filter="url(#hb2)"/>
<rect x="11.8" y="216.10000000000002" width="23" height="15.6" rx="3" fill="#b8e0ff" filter="url(#hb2)"/>
<rect x="341.1" y="216.10000000000002" width="23" height="15.6" rx="3" fill="#b8e0ff" filter="url(#hb2)"/>
</g></svg>
<div class="abs" style="left:1154px;top:300px;width:2px;height:484px;background:#d8e4ea"></div>
<svg class="abs" style="left:1064px;top:488px" width="16" height="22" viewBox="0 0 16 22"><path d="M1.7,1.2 L1.7,16.8 L5.6,13.2 L8.8,19.8 L11.4,18.8 L8.6,12.4 L13.9,12.4 Z" fill="#f4f8ff" stroke="#081838" stroke-width="1.1"/></svg>
<div class="abs" style="left:18px;top:543.5px;width:375.5px;height:240px;background:#fff;overflow:hidden">
<div class="abs" style="left:81.6px;top:0.0px;width:1.2px;height:240.0px;background:#a0a0a0"></div>
<div class="abs" style="left:294.6px;top:0.0px;width:1.2px;height:240.0px;background:#a0a0a0"></div>
<div class="abs" style="left:96.0px;top:13.7px;width:186.0px;height:1.2px;background:#a8a8a8"></div>
<div class="abs" style="left:96.0px;top:12.0px;width:15.0px;height:1.6px;background:#c4c4c4"></div>
<div class="abs" style="left:187.0px;top:12.0px;width:19.0px;height:1.6px;background:#c4c4c4"></div>
<div class="abs" style="left:238.0px;top:12.0px;width:44.0px;height:1.6px;background:#c4c4c4"></div>
<div class="abs" style="left:95.5px;top:19.3px;width:186px;height:50px;border:1px solid #dcdcdc"></div>
<div class="abs" style="left:97.0px;top:79.7px;width:185.0px;height:120.2px;background:#060606"></div>
<div class="abs" style="left:189.5px;top:79.7px;width:2.0px;height:120.2px;background:#d6d6d6"></div>
<div class="abs" style="left:97.0px;top:139.0px;width:185.0px;height:2.0px;background:#d6d6d6"></div>
<div class="abs" style="left:164.0px;top:143.5px;width:18.5px;height:1.0px;background:#3a3a3a"></div>
<div class="abs" style="left:130.0px;top:161.3px;width:44.5px;height:1.0px;background:#3a3a3a"></div>
<div class="abs" style="left:97.0px;top:205.5px;width:185.0px;height:1.2px;background:#b0b0b0"></div>
<div class="abs" style="left:97.0px;top:207.3px;width:52.0px;height:1.6px;background:#cfcfcf"></div>
<div class="abs" style="left:227.7px;top:207.3px;width:12.0px;height:1.6px;background:#cfcfcf"></div>
<div class="abs" style="left:257.8px;top:207.3px;width:23.0px;height:1.6px;background:#cfcfcf"></div>
<div class="abs" style="left:127.8px;top:214.8px;width:126.5px;height:2.2px;background:#b8b8b8"></div>
<div class="abs" style="left:164.3px;top:220.8px;width:26.2px;height:1.6px;background:#cdcdcd"></div>
</div>
<div class="abs" style="left:399px;top:543.5px;width:375.5px;height:240px;background:#fff;overflow:hidden">
<div class="abs" style="left:81.6px;top:0.0px;width:1.2px;height:240.0px;background:#a0a0a0"></div>
<div class="abs" style="left:294.6px;top:0.0px;width:1.2px;height:240.0px;background:#a0a0a0"></div>
<div class="abs" style="left:96.0px;top:13.7px;width:186.0px;height:1.2px;background:#a8a8a8"></div>
<div class="abs" style="left:96.0px;top:12.0px;width:15.0px;height:1.6px;background:#c4c4c4"></div>
<div class="abs" style="left:187.0px;top:12.0px;width:19.0px;height:1.6px;background:#c4c4c4"></div>
<div class="abs" style="left:238.0px;top:12.0px;width:44.0px;height:1.6px;background:#c4c4c4"></div>
<div class="abs" style="left:95.5px;top:19.3px;width:186px;height:50px;border:1px solid #dcdcdc"></div>
<div class="abs" style="left:97.0px;top:79.7px;width:185.0px;height:120.2px;background:#060606"></div>
<div class="abs" style="left:189.5px;top:79.7px;width:2.0px;height:120.2px;background:#d6d6d6"></div>
<div class="abs" style="left:97.0px;top:139.0px;width:185.0px;height:2.0px;background:#d6d6d6"></div>
<div class="abs" style="left:164.0px;top:143.5px;width:18.5px;height:1.0px;background:#3a3a3a"></div>
<div class="abs" style="left:130.0px;top:161.3px;width:44.5px;height:1.0px;background:#3a3a3a"></div>
<div class="abs" style="left:97.0px;top:205.5px;width:185.0px;height:1.2px;background:#b0b0b0"></div>
<div class="abs" style="left:97.0px;top:207.3px;width:52.0px;height:1.6px;background:#cfcfcf"></div>
<div class="abs" style="left:227.7px;top:207.3px;width:12.0px;height:1.6px;background:#cfcfcf"></div>
<div class="abs" style="left:257.8px;top:207.3px;width:23.0px;height:1.6px;background:#cfcfcf"></div>
<div class="abs" style="left:127.8px;top:214.8px;width:126.5px;height:2.2px;background:#b8b8b8"></div>
<div class="abs" style="left:164.3px;top:220.8px;width:26.2px;height:1.6px;background:#cdcdcd"></div>
</div>
<div class="abs" style="left:779px;top:543.5px;width:375.5px;height:240px;background:#fff;overflow:hidden">
<div class="abs" style="left:81.6px;top:0.0px;width:1.2px;height:240.0px;background:#a0a0a0"></div>
<div class="abs" style="left:294.6px;top:0.0px;width:1.2px;height:240.0px;background:#a0a0a0"></div>
<div class="abs" style="left:96.0px;top:13.7px;width:186.0px;height:1.2px;background:#a8a8a8"></div>
<div class="abs" style="left:96.0px;top:12.0px;width:15.0px;height:1.6px;background:#c4c4c4"></div>
<div class="abs" style="left:187.0px;top:12.0px;width:19.0px;height:1.6px;background:#c4c4c4"></div>
<div class="abs" style="left:238.0px;top:12.0px;width:44.0px;height:1.6px;background:#c4c4c4"></div>
<div class="abs" style="left:95.5px;top:19.3px;width:186px;height:50px;border:1px solid #dcdcdc"></div>
<div class="abs" style="left:97.0px;top:79.7px;width:185.0px;height:120.2px;background:#060606"></div>
<div class="abs" style="left:189.5px;top:79.7px;width:2.0px;height:120.2px;background:#d6d6d6"></div>
<div class="abs" style="left:97.0px;top:139.0px;width:185.0px;height:2.0px;background:#d6d6d6"></div>
<div class="abs" style="left:164.0px;top:143.5px;width:18.5px;height:1.0px;background:#3a3a3a"></div>
<div class="abs" style="left:130.0px;top:161.3px;width:44.5px;height:1.0px;background:#3a3a3a"></div>
<div class="abs" style="left:97.0px;top:205.5px;width:185.0px;height:1.2px;background:#b0b0b0"></div>
<div class="abs" style="left:97.0px;top:207.3px;width:52.0px;height:1.6px;background:#cfcfcf"></div>
<div class="abs" style="left:227.7px;top:207.3px;width:12.0px;height:1.6px;background:#cfcfcf"></div>
<div class="abs" style="left:257.8px;top:207.3px;width:23.0px;height:1.6px;background:#cfcfcf"></div>
<div class="abs" style="left:127.8px;top:214.8px;width:126.5px;height:2.2px;background:#b8b8b8"></div>
<div class="abs" style="left:164.3px;top:220.8px;width:26.2px;height:1.6px;background:#cdcdcd"></div>
</div>
</body></html>
